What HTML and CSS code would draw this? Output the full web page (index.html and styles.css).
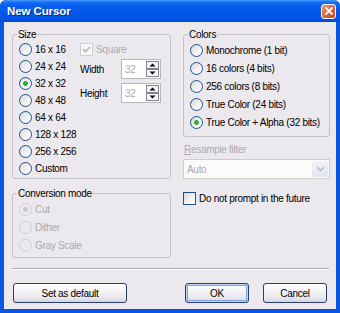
FILE: index.html
```html
<!DOCTYPE html>
<html lang="en">

<head>
    <meta charset="UTF-8">
    <title>New Cursor</title>
    <link rel="stylesheet" href="styles.css">
</head>

<body>
    <div class="window">
        <div class="titlebar">
            <span class="title">New Cursor</span>
            <span class="close">
                <svg width="8" height="8" viewBox="0 0 8 8">
                    <path d="M1 1 L7 7 M7 1 L1 7" stroke="#fff" stroke-width="1.8" stroke-linecap="square" />
                </svg>
            </span>
        </div>

        <div class="client">
            <div class="main">
                <div class="col-left">
                    <fieldset class="group size-group">
                        <legend>Size</legend>
                        <div class="size-body">
                            <div class="radio-list">
                                <div class="radio-row"><span class="radio"></span>16 x 16</div>
                                <div class="radio-row"><span class="radio"></span>24 x 24</div>
                                <div class="radio-row"><span class="radio checked"></span>32 x 32</div>
                                <div class="radio-row"><span class="radio"></span>48 x 48</div>
                                <div class="radio-row"><span class="radio"></span>64 x 64</div>
                                <div class="radio-row"><span class="radio"></span>128 x 128</div>
                                <div class="radio-row"><span class="radio"></span>256 x 256</div>
                                <div class="radio-row"><span class="radio"></span>Custom</div>
                            </div>
                            <div class="size-side">
                                <div class="check-row square disabled">
                                    <span class="check checked">
                                        <svg width="11" height="11" viewBox="0 0 11 11">
                                            <path d="M2 5 L4.5 7.5 L9 3" fill="none" stroke="#c5c2bd" stroke-width="2" />
                                        </svg>
                                    </span>Square
                                </div>
                                <div class="spin-row">
                                    <span class="spin-label">Width</span>
                                    <span class="spin">
                                        <span class="spin-value">32</span>
                                        <svg class="spin-btns" width="13" height="16" viewBox="0 0 13 16">
                                            <rect x="0.5" y="0.5" width="12" height="7" fill="#f5f4f7" stroke="#858290" />
                                            <rect x="0.5" y="8.5" width="12" height="7" fill="#f5f4f7" stroke="#858290" />
                                            <path d="M6.5 2.5 L9.5 5.5 L3.5 5.5 Z" fill="#000" />
                                            <path d="M3.5 10.5 L9.5 10.5 L6.5 13.5 Z" fill="#000" />
                                        </svg>
                                    </span>
                                </div>
                                <div class="spin-row second">
                                    <span class="spin-label">Height</span>
                                    <span class="spin">
                                        <span class="spin-value">32</span>
                                        <svg class="spin-btns" width="13" height="16" viewBox="0 0 13 16">
                                            <rect x="0.5" y="0.5" width="12" height="7" fill="#f5f4f7" stroke="#858290" />
                                            <rect x="0.5" y="8.5" width="12" height="7" fill="#f5f4f7" stroke="#858290" />
                                            <path d="M6.5 2.5 L9.5 5.5 L3.5 5.5 Z" fill="#000" />
                                            <path d="M3.5 10.5 L9.5 10.5 L6.5 13.5 Z" fill="#000" />
                                        </svg>
                                    </span>
                                </div>
                            </div>
                        </div>
                    </fieldset>

                    <fieldset class="group conv-group">
                        <legend>Conversion mode</legend>
                        <div class="radio-list disabled">
                            <div class="radio-row"><span class="radio checked"></span>Cut</div>
                            <div class="radio-row"><span class="radio"></span>Dither</div>
                            <div class="radio-row"><span class="radio"></span>Gray Scale</div>
                        </div>
                    </fieldset>
                </div>

                <div class="col-right">
                    <fieldset class="group colors-group">
                        <legend>Colors</legend>
                        <div class="radio-list">
                            <div class="radio-row"><span class="radio"></span>Monochrome (1 bit)</div>
                            <div class="radio-row"><span class="radio"></span>16 colors (4 bits)</div>
                            <div class="radio-row"><span class="radio"></span>256 colors (8 bits)</div>
                            <div class="radio-row"><span class="radio"></span>True Color (24 bits)</div>
                            <div class="radio-row"><span class="radio checked"></span>True Color + Alpha (32 bits)</div>
                        </div>
                    </fieldset>

                    <div class="field-label disabled"><u>R</u>esample filter</div>
                    <div class="combo">
                        <span class="combo-value">Auto</span>
                        <span class="combo-btn">
                            <svg width="9" height="6" viewBox="0 0 9 6">
                                <path d="M1 1 L4.5 4.5 L8 1" fill="none" stroke="#b3bccd" stroke-width="1.6" />
                            </svg>
                        </span>
                    </div>

                    <div class="check-row prompt">
                        <span class="check"></span>Do not prompt in the future
                    </div>
                </div>
            </div>

            <div class="separator"></div>

            <div class="buttons">
                <button class="btn btn-wide">Set as default</button>
                <div class="btn-group">
                    <button class="btn default">OK</button>
                    <button class="btn">Cancel</button>
                </div>
            </div>
        </div>
    </div>
</body>

</html>
```

FILE: styles.css
```css
body {
    margin: 0;
    background: #ffffff;
    font-family: "Liberation Sans", Arial, sans-serif;
    font-size: 10px;
    letter-spacing: -0.3px;
    color: #000000;
}

.window {
    width: 340px;
    height: 313px;
    display: flex;
    flex-direction: column;
    background: #0a55e2;
    border-radius: 6px 6px 0 0;
    overflow: hidden;
}

/* title bar */
.titlebar {
    height: 22px;
    flex: none;
    display: flex;
    align-items: center;
    justify-content: space-between;
    padding: 0 4px 0 7px;
    background: linear-gradient(to bottom, #4a9bff 0%, #1470f5 10%, #0a5ff0 25%, #0256ea 55%, #0053e3 85%, #004ad8 100%);
}

.title {
    color: #ffffff;
    font-weight: bold;
    font-size: 11.5px;
    letter-spacing: -0.1px;
    text-shadow: 1px 1px 0 #0a2a8a;
}

.close {
    width: 13px;
    height: 13px;
    display: flex;
    align-items: center;
    justify-content: center;
    border: 1px solid #ffffff;
    border-radius: 3px;
    background: linear-gradient(135deg, #ef9a7e 0%, #e06a45 45%, #c9431e 100%);
}

/* client area */
.client {
    flex: 1;
    margin: 0 4px 4px;
    padding: 6px 6px 0 8px;
    background: #ebe9ed;
    display: flex;
    flex-direction: column;
}

.main {
    display: flex;
    gap: 12px;
}

.col-left {
    width: 159px;
}

.col-right {
    width: 148px;
}

.group {
    margin: 0;
    padding: 0;
    border: 1px solid #c4c1c8;
    border-radius: 3px;
    min-width: 0;
}

.group legend {
    margin-left: 4px;
    padding: 0 1px;
    line-height: 13px;
}

.size-group {
    padding-bottom: 1px;
}

.size-body {
    display: flex;
}

.radio-list {
    padding-left: 6px;
}

.size-body .radio-list {
    width: 61px;
}

.radio-row {
    height: 17px;
    display: flex;
    align-items: center;
    gap: 3px;
    white-space: nowrap;
}

.radio {
    width: 11px;
    height: 11px;
    flex: none;
    border: 1px solid #1f5189;
    border-radius: 50%;
    background: linear-gradient(135deg, #d9d8de 0%, #f2f2f4 55%, #ffffff 100%);
}

.radio.checked {
    background: radial-gradient(circle at 50% 50%, #3fcf3f 0, #1f9a1f 2px, transparent 2.6px),
        linear-gradient(135deg, #d9d8de 0%, #f2f2f4 55%, #ffffff 100%);
}

.conv-group {
    margin-top: 8px;
    padding-bottom: 3px;
}

.conv-group .radio-row {
    height: 18px;
}

.disabled {
    color: #aca9b0;
}

.conv-group .radio {
    border-color: #cfcdd3;
    background: #ebe9ed;
}

.conv-group .radio.checked {
    background: radial-gradient(circle at 50% 50%, #c9c7cc 0, #c9c7cc 2px, transparent 2.6px), #ebe9ed;
}

/* size side controls */
.size-side {
    width: 90px;
}

.check-row {
    display: flex;
    align-items: center;
    gap: 3px;
    white-space: nowrap;
}

.check {
    width: 11px;
    height: 11px;
    flex: none;
    display: flex;
    border: 1px solid #1f5189;
    background: linear-gradient(135deg, #d9d8de 0%, #f2f2f4 55%, #ffffff 100%);
}

.square {
    height: 17px;
}

.square .check {
    border-color: #cfcdd3;
    background: #f7f7f8;
}

.spin-row {
    display: flex;
    align-items: center;
    height: 20px;
    margin-top: 1px;
}

.spin-row.second {
    margin-top: 4px;
}

.spin-label {
    width: 41px;
}

.spin {
    width: 40px;
    height: 20px;
    box-sizing: border-box;
    display: flex;
    align-items: center;
    justify-content: space-between;
    padding: 0 1px 0 3px;
    border: 1px solid #b9b6c0;
    background: #ffffff;
}

.spin-value {
    color: #aca9b0;
}

/* right column */
.colors-group {
    padding-bottom: 5px;
}

.colors-group .radio-row {
    height: 18px;
}

.field-label {
    margin-top: 6px;
    padding-left: 1px;
    line-height: 13px;
}

.combo {
    height: 20px;
    margin-top: 3px;
    box-sizing: border-box;
    display: flex;
    align-items: center;
    justify-content: space-between;
    padding: 1px 1px 1px 3px;
    border: 1px solid #cfcdc6;
    background: #fbfbfb;
    color: #aca9b0;
}

.combo-btn {
    width: 16px;
    height: 16px;
    display: flex;
    align-items: center;
    justify-content: center;
    border-radius: 2px;
    background: linear-gradient(to bottom, #f1f3f8, #e1e6f0);
}

.prompt {
    margin-top: 13px;
    gap: 3px;
}

/* bottom */
.separator {
    margin: 10px 1px 0 0;
    border-top: 1px solid #aca9b0;
    border-bottom: 1px solid #ffffff;
}

.buttons {
    display: flex;
    justify-content: space-between;
    margin-top: 13px;
}

.btn-group {
    display: flex;
    gap: 14px;
    margin-right: 3px;
}

.btn {
    height: 20px;
    width: 64px;
    padding: 0;
    font: inherit;
    letter-spacing: inherit;
    color: #000000;
    border: 1px solid #2a3f6e;
    border-radius: 3px;
    background: linear-gradient(to bottom, #ffffff 0%, #f3f3f5 45%, #e6e5ec 80%, #d4d2dd 100%);
}

.btn-wide {
    width: 114px;
    margin-left: 1px;
}

.btn.default {
    box-shadow: inset 0 0 0 1px #c2d6f7, inset 0 0 0 2px #7fa3e8;
}
```
